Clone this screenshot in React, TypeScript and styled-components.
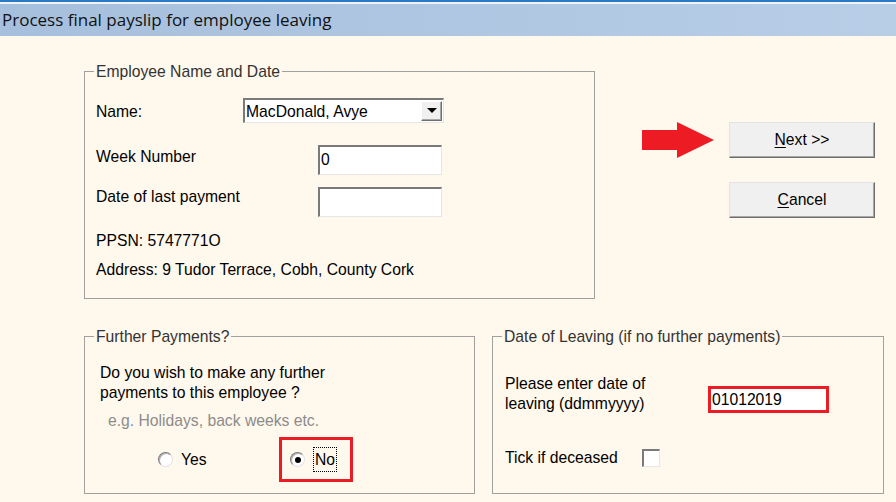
import styled, { createGlobalStyle } from "styled-components";

const GlobalStyle = createGlobalStyle`
  html, body {
    margin: 0;
    padding: 0;
  }
  body {
    font-family: "Liberation Sans", Arial, sans-serif;
  }
`

const Window = styled.div`
  width: 896px;
  height: 502px;
  overflow: hidden;
  background: #fff8ec;
  display: flex;
  flex-direction: column;
  font-size: 15.7px;
  color: #000;
`

const TitleBar = styled.div`
  box-sizing: border-box;
  height: 36px;
  border-top: 2px solid #2a7ac6;
  background:
    linear-gradient(to bottom, #eef3f9 0 2px, transparent 2px),
    linear-gradient(to right, #a6bfdc, #b8cee7);
  padding: 2px 0 0 2px;
  font-family: "Open Sans", "Noto Sans", sans-serif;
  font-size: 17px;
  line-height: 32px;
  color: #111;
`

const Body = styled.div`
  display: flex;
  flex-direction: column;
  padding-left: 84px;
`

const UpperRow = styled.div`
  display: flex;
  align-items: flex-start;
  margin-top: 26px;
`

const LowerRow = styled.div`
  display: flex;
  align-items: flex-start;
  gap: 17px;
  margin-top: 28px;
`

const Group = styled.fieldset<{ $width: number; $height: number }>`
  box-sizing: border-box;
  width: ${p => p.$width}px;
  height: ${p => p.$height}px;
  min-width: 0;
  margin: 0;
  padding: 0;
  border: 1px solid #a0a0a0;
`

const GroupTitle = styled.legend`
  margin-left: 9px;
  padding: 0 2px;
  line-height: 19px;
  color: #333;
`

const GroupBody = styled.div<{ $pad: string }>`
  display: flex;
  flex-direction: column;
  padding: ${p => p.$pad};
`

const FieldRow = styled.div<{ $top: number; $height?: number }>`
  display: flex;
  align-items: flex-start;
  margin-top: ${p => p.$top}px;
  height: ${p => (p.$height ? `${p.$height}px` : "auto")};
`

const Label = styled.span<{ $width: number; $offset?: number }>`
  width: ${p => p.$width}px;
  flex-shrink: 0;
  line-height: 18px;
  padding-top: ${p => p.$offset ?? 0}px;
`

const Text = styled.div<{ $top: number; $indent?: number; $muted?: boolean; $lh?: number }>`
  margin-top: ${p => p.$top}px;
  padding-left: ${p => p.$indent ?? 0}px;
  line-height: ${p => p.$lh ?? 18}px;
  color: ${p => (p.$muted ? "#8c8c8c" : "#000")};
`

const Sunken = styled.div`
  box-sizing: border-box;
  background: #fff;
  border-style: solid;
  border-width: 2px 1px 1px 2px;
  border-color: #7a7a7a #e6e6e6 #e6e6e6 #7a7a7a;
`

const TextBox = styled(Sunken)<{ $width: number; $height: number }>`
  width: ${p => p.$width}px;
  height: ${p => p.$height}px;
  padding-left: 1px;
  line-height: ${p => p.$height - 4}px;
`

const Select = styled(Sunken)`
  display: flex;
  align-items: center;
  width: 201px;
  height: 25px;
  padding: 0 1px 1px 1px;
`

const SelectValue = styled.span`
  flex: 1;
  line-height: 22px;
  padding-top: 2px;
`

const DropButton = styled.span`
  box-sizing: border-box;
  width: 21px;
  height: 20px;
  display: flex;
  align-items: center;
  justify-content: center;
  background: #f0f0f0;
  border: 1px solid;
  border-color: #fff #6d6d6d #6d6d6d #fff;
  box-shadow: inset -1px -1px 0 #a8a8a8;

  &::after {
    content: "";
    border-left: 5px solid transparent;
    border-right: 5px solid transparent;
    border-top: 5px solid #000;
  }
`

const Highlight = styled.div<{ $width: number; $height: number }>`
  box-sizing: border-box;
  width: ${p => p.$width}px;
  height: ${p => p.$height}px;
  border: 3px solid #ec1c24;
`

const DateInput = styled(Highlight)`
  background: #fff;
  margin-top: 12px;
  padding-left: 1px;
  line-height: 21px;
`

const SideColumn = styled.div`
  display: flex;
  flex-direction: column;
  align-items: flex-end;
  margin: 60px 0 0 47px;
`

const NextRow = styled.div`
  display: flex;
  align-items: center;
  gap: 15px;
`

const Button = styled.button<{ $top?: number }>`
  box-sizing: border-box;
  width: 146px;
  height: 36px;
  margin-top: ${p => p.$top ?? 0}px;
  padding: 0;
  font: inherit;
  color: #000;
  background: #f0f0f0;
  border: 1px solid;
  border-color: #e3e3e3 #6d6d6d #6d6d6d #e3e3e3;
  box-shadow: inset -1px -1px 0 #a8a8a8;
  cursor: pointer;

  u {
    text-decoration-thickness: 1px;
    text-underline-offset: 2px;
  }
`

const RadioRow = styled.div`
  display: flex;
  align-items: center;
  margin: 7px 0 0 73px;
`

const RadioOption = styled.label<{ $width?: number }>`
  display: flex;
  align-items: center;
  gap: 8px;
  width: ${p => (p.$width ? `${p.$width}px` : "auto")};
`

const RadioDot = styled.span<{ $checked?: boolean }>`
  box-sizing: border-box;
  width: 15px;
  height: 15px;
  border-radius: 50%;
  background: #fff;
  border: 1px solid;
  border-color: #7a7a7a #e3e3e3 #e3e3e3 #7a7a7a;
  box-shadow: inset 1px 1px 0 #b0b0b0;
  display: flex;
  align-items: center;
  justify-content: center;

  &::after {
    content: "";
    width: 6px;
    height: 6px;
    border-radius: 50%;
    background: ${p => (p.$checked ? "#000" : "transparent")};
  }
`

const NoBox = styled(Highlight)`
  display: flex;
  align-items: center;
  padding-left: 8px;
`

const Focused = styled.span`
  border: 1px dotted #000;
  padding: 0 1px;
  line-height: 23px;
`

const CheckBox = styled(Sunken)`
  width: 18px;
  height: 18px;
`

const Arrow = () => (
  <svg width="72" height="36" viewBox="0 0 72 36">
    <polygon points="0,8 35,8 35,0 72,18 35,36 35,28 0,28" fill="#ed1c24" />
  </svg>
)

const App = () => {
  return (
    <Window>
      <GlobalStyle />
      <TitleBar>Process final payslip for employee leaving</TitleBar>
      <Body>
        <UpperRow>
          <Group $width={511} $height={237}>
            <GroupTitle>Employee Name and Date</GroupTitle>
            <GroupBody $pad="17px 0 0 11px">
              <FieldRow $top={0} $height={25}>
                <Label $width={147} $offset={5}>Name:</Label>
                <Select>
                  <SelectValue>MacDonald, Avye</SelectValue>
                  <DropButton />
                </Select>
              </FieldRow>
              <FieldRow $top={22} $height={30}>
                <Label $width={222} $offset={3}>Week Number</Label>
                <TextBox $width={124} $height={30}>0</TextBox>
              </FieldRow>
              <FieldRow $top={12} $height={30}>
                <Label $width={222} $offset={1}>Date of last payment</Label>
                <TextBox $width={124} $height={30} />
              </FieldRow>
              <Text $top={15}>PPSN: 5747771O</Text>
              <Text $top={11}>Address: 9 Tudor Terrace, Cobh, County Cork</Text>
            </GroupBody>
          </Group>

          <SideColumn>
            <NextRow>
              <Arrow />
              <Button><u>N</u>ext &gt;&gt;</Button>
            </NextRow>
            <Button $top={24}><u>C</u>ancel</Button>
          </SideColumn>
        </UpperRow>

        <LowerRow>
          <Group $width={391} $height={167}>
            <GroupTitle>Further Payments?</GroupTitle>
            <GroupBody $pad="0">
              <Text $top={17} $indent={15} $lh={20}>
                Do you wish to make any further<br />payments to this employee ?
              </Text>
              <Text $top={9} $indent={23} $muted>e.g. Holidays, back weeks etc.</Text>
              <RadioRow>
                <RadioOption $width={121}>
                  <RadioDot />
                  Yes
                </RadioOption>
                <NoBox $width={74} $height={45}>
                  <RadioOption>
                    <RadioDot $checked />
                    <Focused>No</Focused>
                  </RadioOption>
                </NoBox>
              </RadioRow>
            </GroupBody>
          </Group>

          <Group $width={392} $height={167}>
            <GroupTitle>Date of Leaving (if no further payments)</GroupTitle>
            <GroupBody $pad="0 0 0 12px">
              <FieldRow $top={28}>
                <Label $width={203}>
                  <Text $top={0} $lh={20}>Please enter date of<br />leaving (ddmmyyyy)</Text>
                </Label>
                <DateInput $width={121} $height={27}>01012019</DateInput>
              </FieldRow>
              <FieldRow $top={35}>
                <Label $width={137}>Tick if deceased</Label>
                <CheckBox />
              </FieldRow>
            </GroupBody>
          </Group>
        </LowerRow>
      </Body>
    </Window>
  )
}

export default App;
